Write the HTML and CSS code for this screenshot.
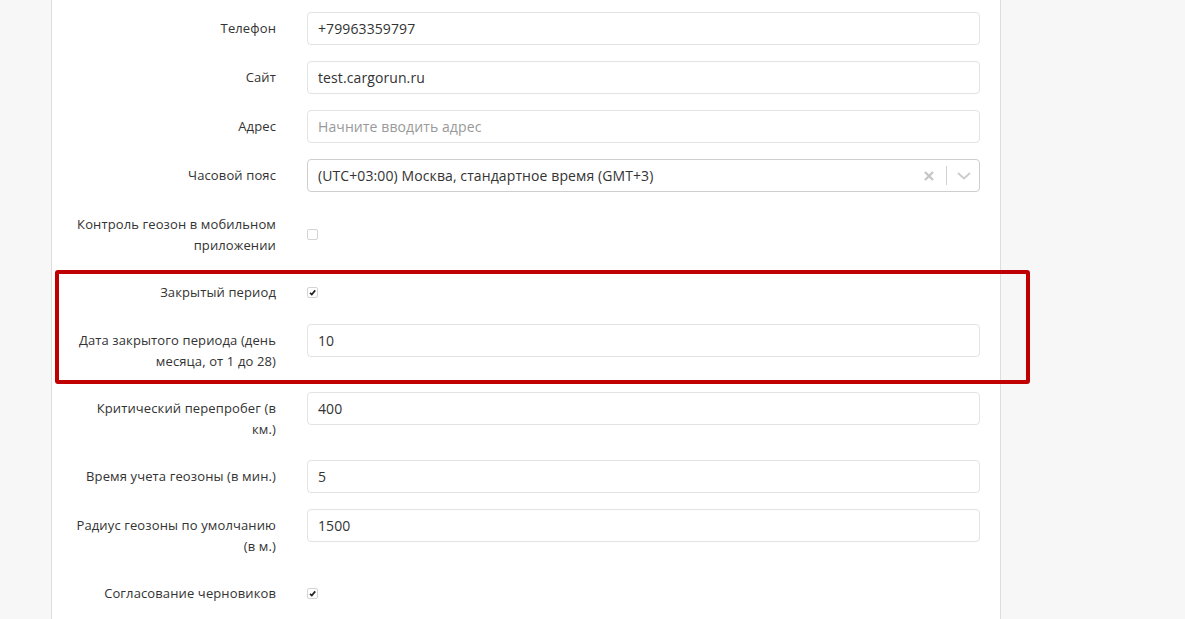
FILE: index.html
```html
<!DOCTYPE html>
<html>
<head>
  <meta charset="UTF-8">
  <title>Настройки компании</title>
  <link rel="stylesheet" href="styles.css">
</head>
<body>
  <div class="panel">
    <form class="settings">
      <div class="row">
        <label class="row-label" for="phone">Телефон</label>
        <div class="row-field"><input class="field" id="phone" type="text" value="+79963359797"></div>
      </div>

      <div class="row">
        <label class="row-label" for="site">Сайт</label>
        <div class="row-field"><input class="field" id="site" type="text" value="test.cargorun.ru"></div>
      </div>

      <div class="row">
        <label class="row-label" for="address">Адрес</label>
        <div class="row-field"><input class="field" id="address" type="text" placeholder="Начните вводить адрес"></div>
      </div>

      <div class="row">
        <label class="row-label">Часовой пояс</label>
        <div class="row-field">
          <div class="select">
            <span class="select-value">(UTC+03:00) Москва, стандартное время (GMT+3)</span>
            <svg class="select-clear" width="10" height="10" viewBox="0 0 10 10">
              <path d="M1 1 L9 9 M9 1 L1 9" stroke="#c4c4c4" stroke-width="2.2" fill="none"/>
            </svg>
            <span class="select-sep"></span>
            <svg class="select-arrow" width="14" height="8" viewBox="0 0 14 8">
              <path d="M1 1 L7 6.5 L13 1" stroke="#cccccc" stroke-width="1.8" fill="none"/>
            </svg>
          </div>
        </div>
      </div>

      <div class="row">
        <label class="row-label">Контроль геозон в мобильном приложении</label>
        <div class="row-field check-cell"><span class="check"></span></div>
      </div>

      <!-- highlighted block -->
      <div class="highlight">
        <div class="row">
          <label class="row-label">Закрытый период</label>
          <div class="row-field check-cell">
            <span class="check">
              <svg width="9" height="9" viewBox="0 0 9 9"><path d="M2 4.8 L3.8 6.6 L7.2 2.4" stroke="#222" stroke-width="1.7" fill="none"/></svg>
            </span>
          </div>
        </div>

        <div class="row">
          <label class="row-label" for="closedDay">Дата закрытого периода (день месяца, от 1 до 28)</label>
          <div class="row-field"><input class="field" id="closedDay" type="text" value="10"></div>
        </div>
      </div>

      <div class="row">
        <label class="row-label" for="overrun">Критический перепробег (в км.)</label>
        <div class="row-field"><input class="field" id="overrun" type="text" value="400"></div>
      </div>

      <div class="row">
        <label class="row-label" for="geoTime">Время учета геозоны (в мин.)</label>
        <div class="row-field"><input class="field" id="geoTime" type="text" value="5"></div>
      </div>

      <div class="row">
        <label class="row-label" for="geoRadius">Радиус геозоны по умолчанию (в м.)</label>
        <div class="row-field"><input class="field" id="geoRadius" type="text" value="1500"></div>
      </div>

      <div class="row">
        <label class="row-label">Согласование черновиков</label>
        <div class="row-field check-cell">
          <span class="check">
            <svg width="9" height="9" viewBox="0 0 9 9"><path d="M2 4.8 L3.8 6.6 L7.2 2.4" stroke="#222" stroke-width="1.7" fill="none"/></svg>
          </span>
        </div>
      </div>
    </form>
  </div>
</body>
</html>
```

FILE: styles.css
```css
body {
  margin: 0;
  background: #f7f7f7;
  font-family: "Open Sans", "Liberation Sans", sans-serif;
  color: #333;
  overflow: hidden;
}
.panel {
  margin-left: 51px;
  width: 950px;
  min-height: 640px;
  box-sizing: border-box;
  padding: 12px 20px 20px 21px;
  background: #fff;
  border-left: 1px solid #dedede;
  border-right: 1px solid #dedede;
}
.row {
  display: grid;
  grid-template-columns: 203px 1fr;
  column-gap: 31px;
  align-items: start;
  margin-bottom: 16px;
}
.row-label {
  text-align: right;
  font-size: 13px;
  line-height: 21px;
  letter-spacing: 0.12px;
  padding: 6px 0 4px;
  color: #333;
}
.field {
  display: block;
  width: 100%;
  height: 33px;
  box-sizing: border-box;
  padding: 0 10px;
  border: 1px solid #e3e3e3;
  border-radius: 4px;
  font-family: inherit;
  font-size: 14px;
  letter-spacing: 0.1px;
  color: #333;
  background: #fff;
  outline: none;
}
.field::placeholder {
  color: #999;
}
.select {
  display: flex;
  align-items: center;
  height: 33px;
  box-sizing: border-box;
  padding: 0 8px 0 10px;
  border: 1px solid #cfcfcf;
  border-radius: 4px;
  font-size: 14px;
  letter-spacing: 0.1px;
}
.select-value {
  flex: 1;
}
.select-clear {
  margin-right: 12px;
}
.select-sep {
  width: 1px;
  height: 19px;
  background: #d2d2d2;
  margin-right: 10px;
}
.check-cell {
  display: flex;
  align-items: center;
  align-self: stretch;
  min-height: 32px;
}
.check {
  display: flex;
  align-items: center;
  justify-content: center;
  width: 11px;
  height: 11px;
  box-sizing: border-box;
  border: 1px solid #d4d4d4;
  border-radius: 2px;
  background: #fff;
}
.highlight {
  margin: -6px -50px 8px -18px;
  padding: 2px 46px 4px 14px;
  border: 4px solid #c00000;
  border-radius: 3px;
}
.highlight .row:last-child {
  margin-bottom: 0;
}
```
